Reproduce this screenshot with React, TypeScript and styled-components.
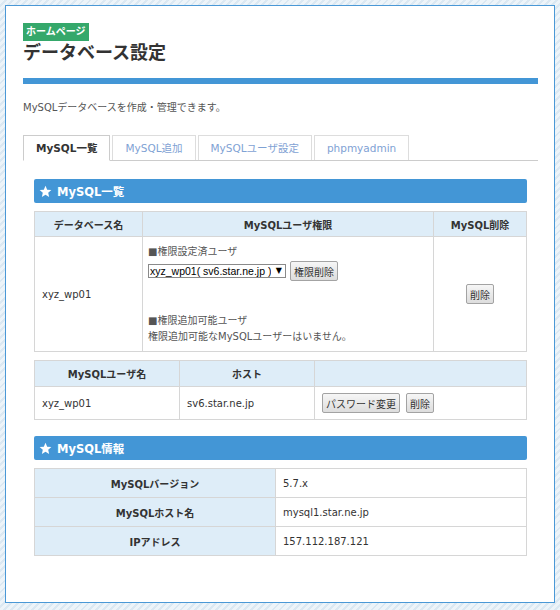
import React from "react";
import styled, { createGlobalStyle } from "styled-components";

const GlobalStyle = createGlobalStyle`
  html, body {
    margin: 0;
    padding: 0;
  }

  body {
    min-height: 610px;
    font-family: "DejaVu Sans", "Noto Sans CJK JP", sans-serif;
    color: #333;
    background: repeating-linear-gradient(135deg, #edf4f9 0 3px, #dbe8f2 3px 5px);
  }
`;

const Page = styled.div`
  padding: 5px 6px 7px 5px;
`;

const Panel = styled.div`
  box-sizing: border-box;
  width: 550px;
  height: 598px;
  background: #fff;
  border: 1px solid #4a98d6;
  padding: 17px 16px 0 17px;
`;

const Badge = styled.span`
  display: block;
  width: fit-content;
  height: 18px;
  line-height: 18px;
  padding: 0 3px;
  background: #35a86b;
  color: #fff;
  font-size: 10px;
  font-weight: 700;
`;

const Title = styled.h1`
  margin: 1px 0 0;
  font-size: 18px;
  line-height: 22px;
  font-weight: 700;
  color: #333;
`;

const TitleBar = styled.div`
  height: 6px;
  margin-top: 14px;
  background: #4396d6;
`;

const Description = styled.p`
  margin: 16px 0 0;
  font-size: 10px;
  line-height: 16px;
  color: #555;
`;

const Tabs = styled.div`
  display: flex;
  gap: 2px;
  margin-top: 19px;
  border-bottom: 1px solid #ccc;
`;

const Tab = styled.div<{ $active?: boolean }>`
  box-sizing: border-box;
  height: ${(p) => (p.$active ? "26px" : "25px")};
  margin-bottom: ${(p) => (p.$active ? "-1px" : "0")};
  padding: 0 12px;
  line-height: 24px;
  border: 1px solid ${(p) => (p.$active ? "#ccc" : "#ddd")};
  border-bottom: ${(p) => (p.$active ? "1px solid #fff" : "none")};
  background: #fff;
  font-size: 10.5px;
  font-weight: ${(p) => (p.$active ? 700 : 400)};
  color: ${(p) => (p.$active ? "#333" : "#7fa2d4")};
  white-space: nowrap;
`;

const Section = styled.section<{ $top: number }>`
  margin: ${(p) => p.$top}px 11px 0;
`;

const SectionHeader = styled.h2`
  display: flex;
  align-items: center;
  gap: 5px;
  height: 24px;
  margin: 0;
  padding-left: 5px;
  background: #4396d6;
  border-radius: 2px;
  color: #fff;
  font-size: 11.5px;
  font-weight: 700;
`;

const Table = styled.table<{ $top: number }>`
  width: 100%;
  margin-top: ${(p) => p.$top}px;
  border-collapse: collapse;
  table-layout: fixed;
  font-size: 10px;
`;

const Th = styled.th<{ $h?: number }>`
  height: ${(p) => p.$h ?? 24}px;
  padding: 0 7px;
  background: #deedf8;
  border: 1px solid #d6d6d6;
  font-weight: 700;
  text-align: center;
  color: #333;
`;

const Td = styled.td<{ $h?: number; $center?: boolean }>`
  height: ${(p) => p.$h ?? 28}px;
  padding: 0 7px;
  border: 1px solid #d6d6d6;
  text-align: ${(p) => (p.$center ? "center" : "left")};
  vertical-align: middle;
  color: #333;
`;

const PermCell = styled.td`
  padding: 7px 5px 6px;
  border: 1px solid #d6d6d6;
  vertical-align: top;
  color: #555;
`;

const Line = styled.div`
  line-height: 16px;
  white-space: nowrap;
`;

const Controls = styled.div<{ $gap: number }>`
  display: flex;
  align-items: center;
  gap: ${(p) => p.$gap}px;
  margin: 1px 0 32px;
`;

const ButtonRow = styled.div`
  display: flex;
  align-items: center;
  gap: 6px;
`;

const SelectWrap = styled.div`
  position: relative;
  display: inline-block;
`;

const Select = styled.select`
  box-sizing: border-box;
  appearance: none;
  height: 14px;
  width: 138px;
  padding: 0 14px 0 1px;
  border: 1px solid #8a8a8a;
  border-radius: 0;
  background: #fff;
  font-family: "Liberation Sans", Arial, sans-serif;
  font-size: 10.5px;
  line-height: 12px;
  color: #000;
`;

const Arrow = styled.span`
  position: absolute;
  right: 4px;
  top: 1px;
  font-size: 8px;
  line-height: 12px;
  color: #000;
  pointer-events: none;
`;

const Button = styled.button`
  box-sizing: border-box;
  height: 20px;
  padding: 0 3px;
  border: 1px solid #a3a3a3;
  border-radius: 2px;
  background: linear-gradient(#f6f6f6, #dddddd);
  font-family: "Noto Sans CJK JP", sans-serif;
  font-size: 10px;
  color: #333;
`;

const Star = () => (
  <svg width="13" height="13" viewBox="0 0 24 24" aria-hidden="true">
    <polygon
      fill="#fff"
      points="12,1.5 15.1,8.6 22.8,9.3 17,14.4 18.7,22 12,18 5.3,22 7,14.4 1.2,9.3 8.9,8.6"
    />
  </svg>
);

const tabs = ["MySQL一覧", "MySQL追加", "MySQLユーザ設定", "phpmyadmin"];

const info = [
  { label: "MySQLバージョン", value: "5.7.x" },
  { label: "MySQLホスト名", value: "mysql1.star.ne.jp" },
  { label: "IPアドレス", value: "157.112.187.121" },
];

export default function App() {
  return (
    <>
      <GlobalStyle />
      <Page>
        <Panel>
          <Badge>ホームページ</Badge>
          <Title>データベース設定</Title>
          <TitleBar />
          <Description>MySQLデータベースを作成・管理できます。</Description>

          <Tabs>
            {tabs.map((t, i) => (
              <Tab key={t} $active={i === 0}>
                {t}
              </Tab>
            ))}
          </Tabs>

          <Section $top={18}>
            <SectionHeader>
              <Star />
              MySQL一覧
            </SectionHeader>
            <Table $top={8}>
              <colgroup>
                <col style={{ width: 108 }} />
                <col style={{ width: 291 }} />
                <col />
              </colgroup>
              <thead>
                <tr>
                  <Th>データベース名</Th>
                  <Th>MySQLユーザ権限</Th>
                  <Th>MySQL削除</Th>
                </tr>
              </thead>
              <tbody>
                <tr>
                  <Td>xyz_wp01</Td>
                  <PermCell>
                    <Line>■権限設定済ユーザ</Line>
                    <Controls $gap={4}>
                      <SelectWrap>
                        <Select defaultValue="xyz_wp01">
                          <option value="xyz_wp01">xyz_wp01( sv6.star.ne.jp )</option>
                        </Select>
                        <Arrow>▼</Arrow>
                      </SelectWrap>
                      <Button>権限削除</Button>
                    </Controls>
                    <Line>■権限追加可能ユーザ</Line>
                    <Line>権限追加可能なMySQLユーザーはいません。</Line>
                  </PermCell>
                  <Td $center>
                    <Button>削除</Button>
                  </Td>
                </tr>
              </tbody>
            </Table>

            <Table $top={8}>
              <colgroup>
                <col style={{ width: 145 }} />
                <col style={{ width: 135 }} />
                <col />
              </colgroup>
              <thead>
                <tr>
                  <Th $h={25}>MySQLユーザ名</Th>
                  <Th $h={25}>ホスト</Th>
                  <Th $h={25} />
                </tr>
              </thead>
              <tbody>
                <tr>
                  <Td $h={32}>xyz_wp01</Td>
                  <Td $h={32}>sv6.star.ne.jp</Td>
                  <Td $h={32}>
                    <ButtonRow>
                      <Button>パスワード変更</Button>
                      <Button>削除</Button>
                    </ButtonRow>
                  </Td>
                </tr>
              </tbody>
            </Table>
          </Section>

          <Section $top={16}>
            <SectionHeader>
              <Star />
              MySQL情報
            </SectionHeader>
            <Table $top={8}>
              <colgroup>
                <col style={{ width: 241 }} />
                <col />
              </colgroup>
              <tbody>
                {info.map((row) => (
                  <tr key={row.label}>
                    <Th $h={28}>{row.label}</Th>
                    <Td $h={28}>{row.value}</Td>
                  </tr>
                ))}
              </tbody>
            </Table>
          </Section>
        </Panel>
      </Page>
    </>
  );
}
